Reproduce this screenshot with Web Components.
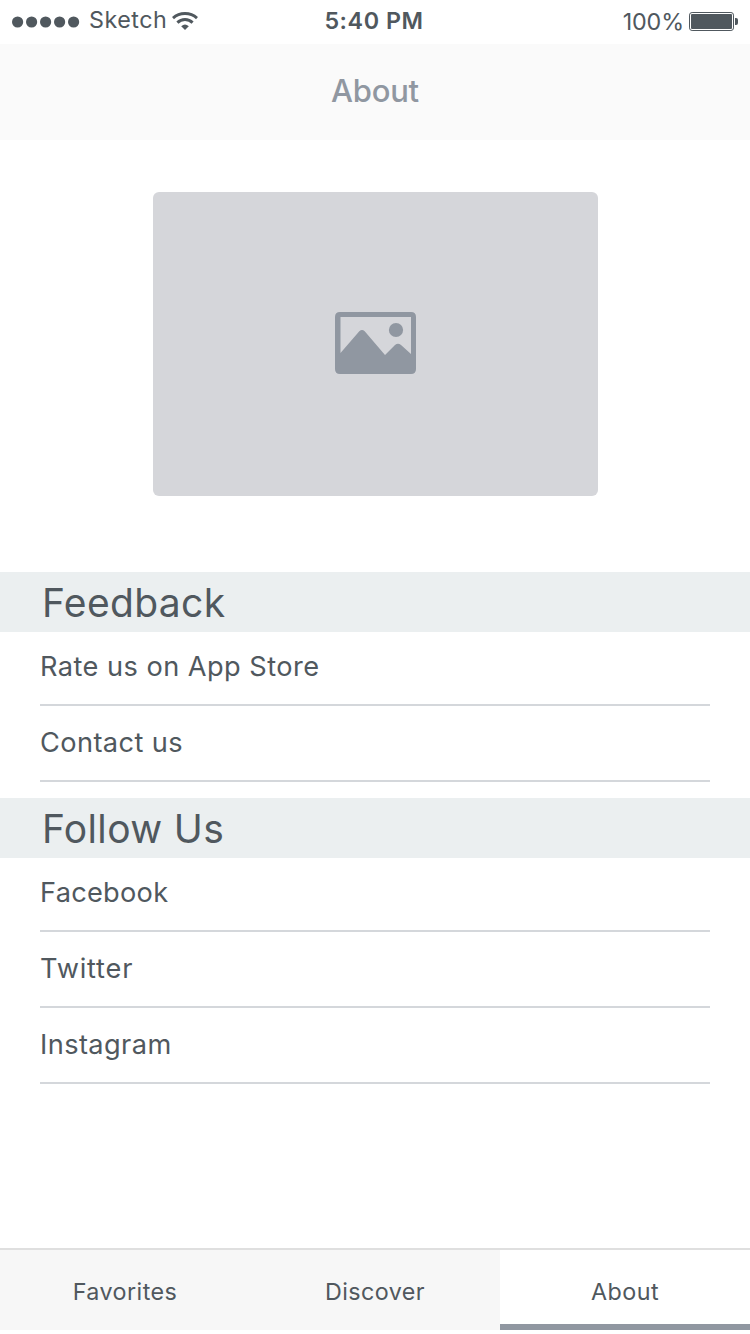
<!DOCTYPE html>
<html lang="en">
<head>
<meta charset="utf-8">
<title>About</title>
<style>
  html, body { margin: 0; background: #fff; }
  body { font-family: Inter, "Liberation Sans", sans-serif; color: #50585e; }
</style>
</head>
<body>
<about-screen></about-screen>
<script>
const define = (name, html) => customElements.define(name, class extends HTMLElement {
  constructor() {
    super();
    const t = document.createElement('template');
    t.innerHTML = html;
    this.attachShadow({ mode: 'open' }).append(t.content.cloneNode(true));
  }
});

define('status-bar', `
<style>
  :host { display: grid; grid-template-columns: 1fr auto 1fr; height: 44px; box-sizing: border-box; padding: 0 12px; line-height: 42px; font-size: 23.3px; white-space: nowrap; }
  .left, .right { display: flex; align-items: center; height: 42px; }
  .right { justify-content: flex-end; }
  .carrier { margin: -2px 0 0 9px; width: 83px; letter-spacing: .5px; }
  .time { font-weight: 600; letter-spacing: .55px; margin-right: 2px; }
  .pct { letter-spacing: -.1px; margin: 2px 5px 0 0; }
  svg { display: block; flex: none; }
  .left svg:first-child { margin-top: 1px; }
  .battery { margin: 2px -1px 0 0; }
</style>
<div class="left">
  <svg width="68" height="12" fill="#50585e"><circle cx="5.6" cy="6" r="5.6"/><circle cx="19.6" cy="6" r="5.6"/><circle cx="33.6" cy="6" r="5.6"/><circle cx="47.6" cy="6" r="5.6"/><circle cx="61.6" cy="6" r="5.6"/></svg>
  <span class="carrier">Sketch</span>
  <svg width="26" height="18" viewBox="0 0 26 18" fill="none" stroke="#50585e" stroke-width="2.9"><path d="M1 6.1Q6 1.5 13 1.5T25 6.1M5.4 10.6Q8.5 7.5 13 7.5T20.6 10.6"/><path d="M9.2 14.3Q13 10.9 16.8 14.3L13 18Z" fill="#50585e" stroke="none"/></svg>
</div>
<span class="time">5:40 PM</span>
<div class="right">
  <span class="pct">100%</span>
  <svg class="battery" width="50" height="20" viewBox="0 0 50 20"><rect x=".5" y=".5" width="44" height="18" rx="2.6" fill="none" stroke="#50585e"/><rect x="2" y="2" width="41" height="15" rx="1" fill="#50585e"/><path d="M46 6h1q2 0 2 2v3q0 2-2 2h-1z" fill="#50585e"/></svg>
</div>`);

define('nav-header', `
<style>
  :host { display: block; height: 96px; background: #fafafa; text-align: center; font-size: 31px; font-weight: 500; line-height: 94px; color: #9097a1; letter-spacing: -.25px; }
</style><slot></slot>`);

define('image-placeholder', `
<style>
  :host { display: flex; align-items: center; justify-content: center; width: 445px; height: 304px; margin: 52px auto 76px; border-radius: 6px; background: #d5d6da; }
  svg { display: block; margin: -2px 0 0 1px; }
</style>
<svg width="81" height="62" viewBox="0 0 81 62"><path fill="#9097a1" fill-rule="evenodd" d="M5 0H76Q81 0 81 5V57Q81 62 76 62H5Q0 62 0 57V5Q0 0 5 0ZM5.5 5V41L24.3 19.3Q27 16.5 29.7 19.3L50 43L60 33Q63 30.5 66 33L76 42V5Z"/><circle cx="61" cy="18" r="7.1" fill="#9097a1"/></svg>`);

define('list-section', `
<style>
  :host { display: block; padding-bottom: 16px; }
  h2 { margin: 0; height: 60px; padding-left: 42px; background: #ebeff0; font-size: 39px; line-height: 61px; font-weight: 400; letter-spacing: .35px; }
</style><h2><slot name="title"></slot></h2><slot></slot>`);

define('list-item', `
<style>
  :host { display: block; box-sizing: border-box; height: 76px; margin: 0 40px; padding-top: 4px; border-bottom: 2px solid #d4d7db; font-size: 27.2px; line-height: 66px; letter-spacing: var(--tracking, .4px); }
  :host([first]) { height: 74px; padding-top: 2px; }
</style><slot></slot>`);

define('tab-item', `
<style>
  :host { flex: 1; box-sizing: border-box; height: 80px; background: #f7f7f7; text-align: center; font-size: 23.3px; line-height: 84px; letter-spacing: .45px; }
  :host([active]) { background: #fff; border-bottom: 6px solid #9097a1; }
</style><slot></slot>`);

define('tab-bar', `
<style>
  :host { display: flex; box-sizing: border-box; height: 82px; border-top: 2px solid #dfdfdf; }
</style><slot></slot>`);

define('about-screen', `
<style>
  :host { display: flex; flex-direction: column; width: 750px; height: 1330px; margin-bottom: 4px; }
  main { flex: 1; display: flow-root; }
  .rate { --tracking: .45px; }
  .facebook { --tracking: .27px; }
  .twitter { --tracking: .8px; }
</style>
<status-bar></status-bar>
<nav-header>About</nav-header>
<main>
  <image-placeholder></image-placeholder>
  <list-section><span slot="title">Feedback</span>
    <list-item first class="rate">Rate us on App Store</list-item>
    <list-item>Contact us</list-item>
  </list-section>
  <list-section><span slot="title">Follow Us</span>
    <list-item first class="facebook">Facebook</list-item>
    <list-item class="twitter">Twitter</list-item>
    <list-item>Instagram</list-item>
  </list-section>
</main>
<tab-bar>
  <tab-item>Favorites</tab-item>
  <tab-item>Discover</tab-item>
  <tab-item active>About</tab-item>
</tab-bar>`);
</script>
</body>
</html>
